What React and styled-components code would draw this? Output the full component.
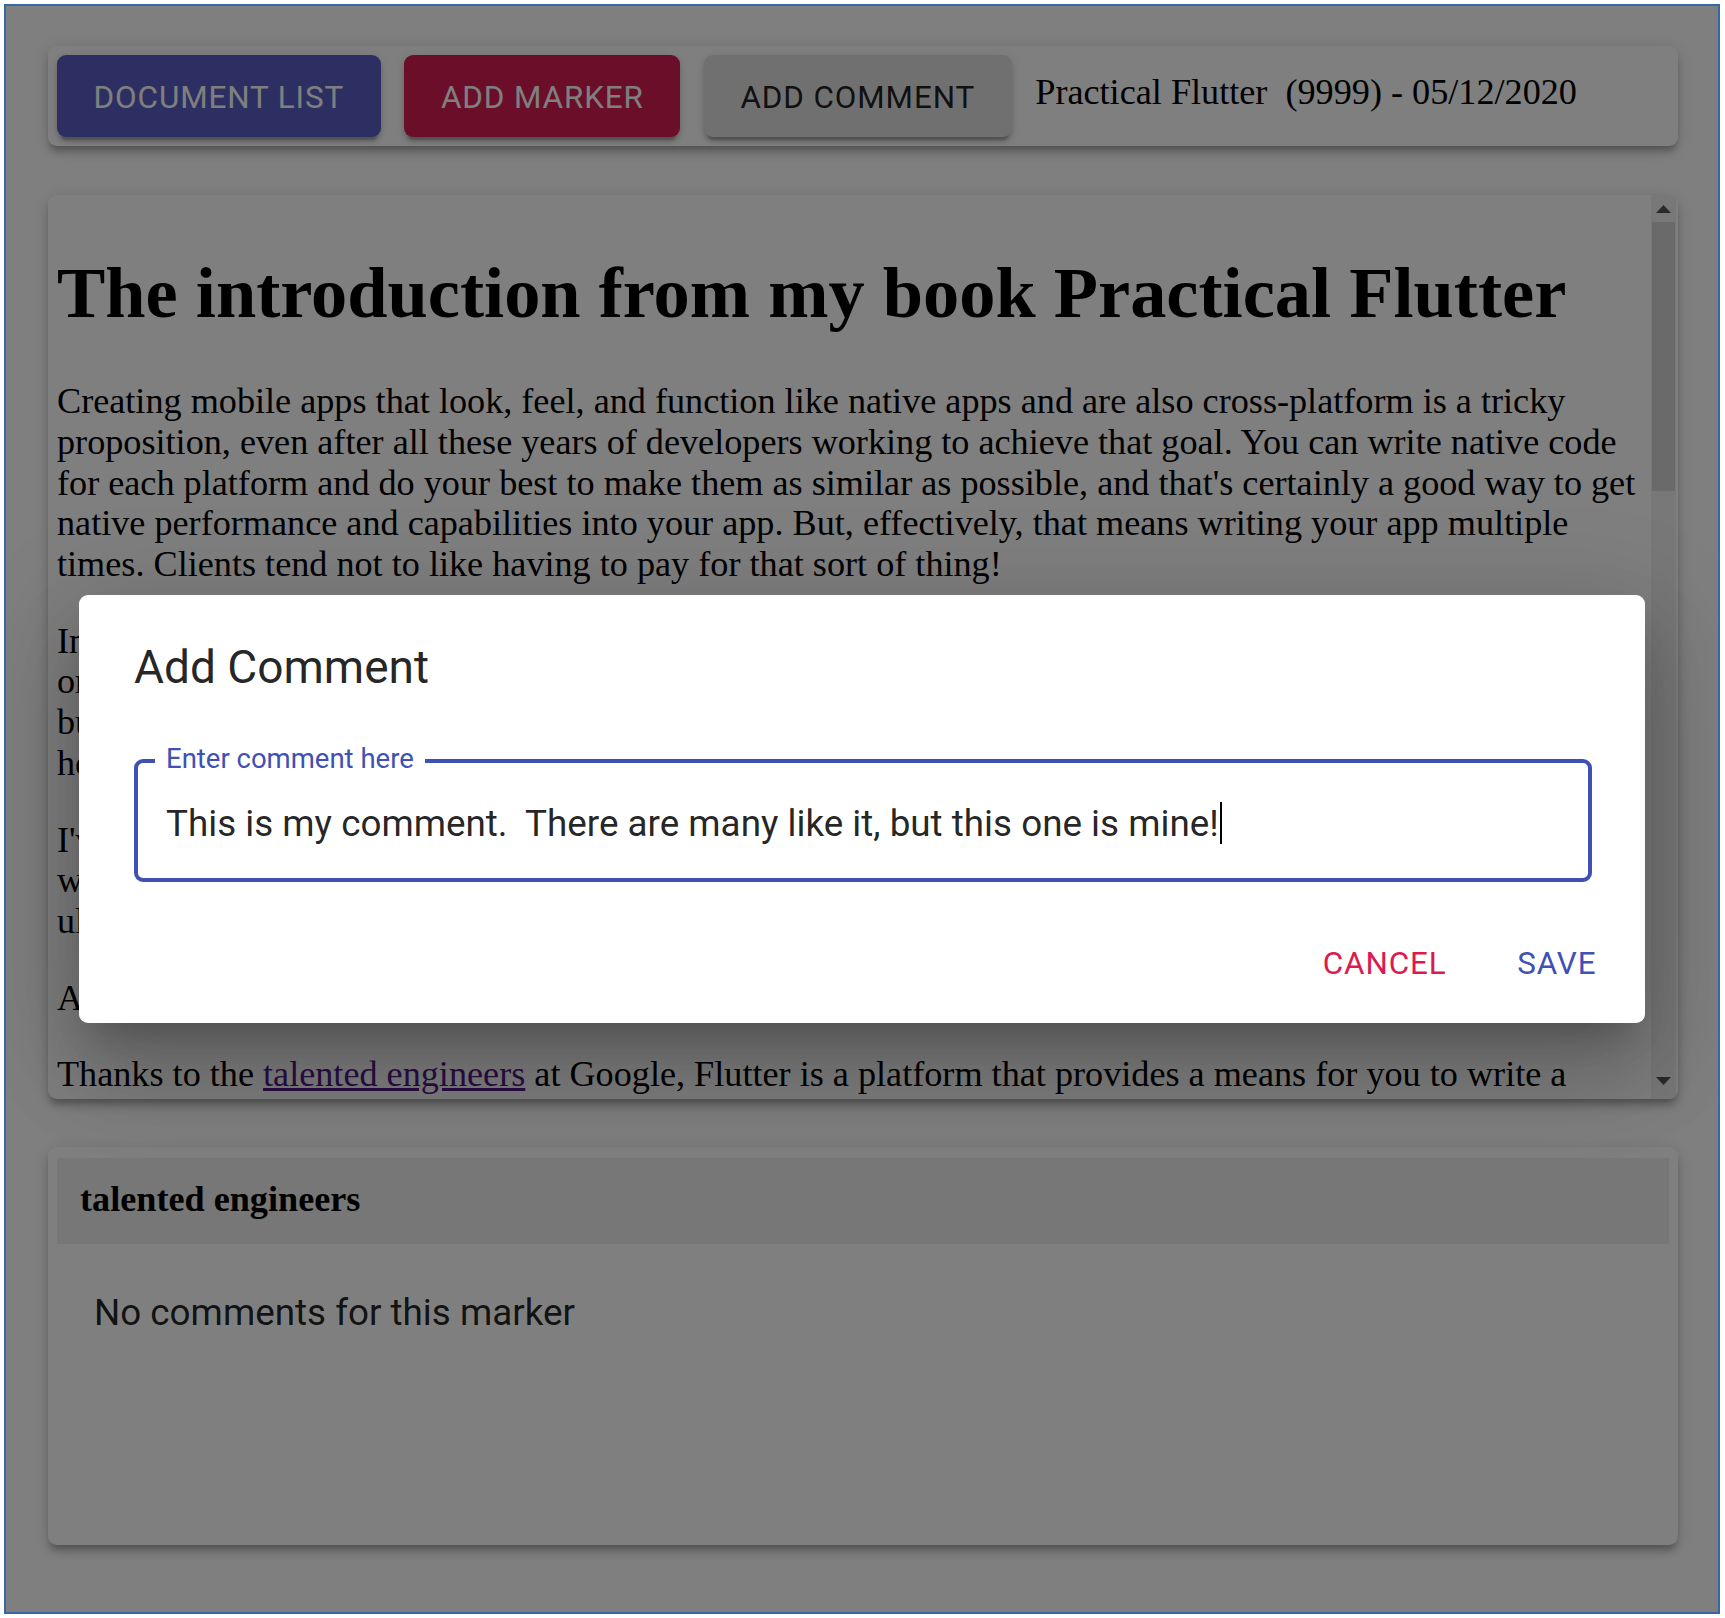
import React from "react";
import styled, { createGlobalStyle } from "styled-components";

const GlobalStyle = createGlobalStyle`
  html, body {
    margin: 0;
    padding: 0;
    background: #ffffff;
    overflow: hidden;
  }
  body {
    font-family: "Liberation Serif", "Times New Roman", serif;
  }
  * { box-sizing: border-box; }
`;

const Frame = styled.div`
  position: relative;
  margin: 4px 5px 4px 4px;
  height: calc(100vh - 8px);
  border: 2px solid #3567a9;
  background: #ffffff;
  overflow: hidden;
`;

const Page = styled.div`
  display: flex;
  flex-direction: column;
  padding: 40px 40px 0 42px;
`;

const paperShadow = `
  0 6.6px 6.6px -4.4px rgba(0,0,0,0.2),
  0 6.6px 8.8px 0 rgba(0,0,0,0.14),
  0 2.2px 17.7px 0 rgba(0,0,0,0.12)
`;

const Toolbar = styled.div`
  display: flex;
  align-items: flex-start;
  gap: 23.5px;
  padding: 9px;
  background: #ffffff;
  border-radius: 9px;
  box-shadow: ${paperShadow};
`;

const ActionButton = styled.button`
  font-family: Roboto, "Liberation Sans", sans-serif;
  font-weight: 400;
  font-size: 31.4px;
  letter-spacing: 0.9px;
  line-height: 54px;
  text-transform: uppercase;
  padding: 15.5px 36.6px 12.5px 36.6px;
  border: none;
  border-radius: 9px;
  background: ${(p) => p.$bg};
  color: ${(p) => p.$fg};
  box-shadow:
    0 6.6px 2.2px -4.4px rgba(0,0,0,0.2),
    0 4.4px 4.4px 0 rgba(0,0,0,0.14),
    0 2.2px 11px 0 rgba(0,0,0,0.12);
  cursor: pointer;
`;

const DocTitle = styled.div`
  margin-top: 17px;
  font-family: "Liberation Serif", "Times New Roman", serif;
  font-size: 36.2px;
  line-height: 40.7px;
  white-space: pre;
  color: #000000;
`;

const DocPaper = styled.section`
  display: flex;
  margin-top: 49px;
  height: 904px;
  background: #ffffff;
  border-radius: 9px;
  overflow: hidden;
  box-shadow: ${paperShadow};
`;

const DocBody = styled.article`
  flex: 1;
  overflow: hidden;
  padding: 10px 9px 0 9px;
  font-family: "Liberation Serif", "Times New Roman", serif;
  font-size: 36.2px;
  line-height: 40.7px;
  color: #000000;
`;

const Heading = styled.h1`
  font-size: 72.4px;
  font-weight: bold;
  line-height: 81.4px;
  margin: 47.4px 0;
`;

const Para = styled.p`
  margin: 36px 0;
`;

const Link = styled.a`
  color: #551a8b;
  text-decoration: underline;
`;

const ScrollTrack = styled.div`
  display: flex;
  flex-direction: column;
  width: 25px;
  margin-right: 2px;
  background: #f1f1f1;
`;

const ScrollArrow = styled.div`
  display: flex;
  align-items: center;
  justify-content: center;
  height: ${(p) => p.$h}px;
`;

const ScrollThumb = styled.div`
  height: 269px;
  margin: 0 1px;
  background: #d4d4d4;
`;

const ScrollSpace = styled.div`
  flex: 1;
`;

const CommentsPaper = styled.section`
  display: flex;
  flex-direction: column;
  margin-top: 48px;
  height: 398px;
  padding: 11px 9px 9px 9px;
  background: #ffffff;
  border-radius: 9px;
  box-shadow: ${paperShadow};
`;

const MarkerHeader = styled.div`
  display: flex;
  align-items: center;
  height: 86px;
  padding: 0 0 4px 23px;
  background: #eeeeee;
  font-family: "Liberation Serif", "Times New Roman", serif;
  font-weight: bold;
  font-size: 36.2px;
  color: #000000;
`;

const EmptyNote = styled.div`
  padding: 41px 37px;
  font-family: Roboto, "Liberation Sans", sans-serif;
  font-size: 36.8px;
  line-height: 1.5;
  color: rgba(0,0,0,0.87);
`;

const Backdrop = styled.div`
  position: absolute;
  inset: 0;
  display: flex;
  align-items: center;
  justify-content: center;
  background: rgba(0,0,0,0.5);
`;

const Dialog = styled.div`
  width: calc(100% - 146px);
  background: #ffffff;
  border-radius: 9px;
  box-shadow:
    0 24px 33px -15px rgba(0,0,0,0.2),
    0 53px 84px 7px rgba(0,0,0,0.14),
    0 20px 102px 18px rgba(0,0,0,0.12);
`;

const DialogTitle = styled.h2`
  margin: 0;
  padding: 37px 53px 34px 55px;
  font-family: Roboto, "Liberation Sans", sans-serif;
  font-weight: 400;
  font-size: 46px;
  line-height: 70.7px;
  color: rgba(0,0,0,0.87);
`;

const DialogContent = styled.div`
  padding: 21.5px 53px 24px 55px;
`;

const OutlinedField = styled.div`
  position: relative;
  display: flex;
  align-items: center;
  height: 123px;
  padding: 6px 30px 0 28px;
  border: 4px solid #3f51b5;
  border-radius: 9px;
`;

const FieldLabel = styled.label`
  position: absolute;
  left: 17px;
  top: -18px;
  padding: 0 11px;
  background: #ffffff;
  font-family: Roboto, "Liberation Sans", sans-serif;
  font-size: 27.5px;
  line-height: 27px;
  color: #3f51b5;
`;

const FieldValue = styled.div`
  display: flex;
  align-items: center;
  font-family: Roboto, "Liberation Sans", sans-serif;
  font-size: 36.8px;
  white-space: pre;
  color: rgba(0,0,0,0.87);
`;

const Caret = styled.span`
  display: inline-block;
  width: 2px;
  height: 42px;
  margin-left: 1px;
  background: #000000;
`;

const DialogActions = styled.div`
  display: flex;
  justify-content: flex-end;
  gap: 22px;
  padding: 17.7px;
`;

const TextButton = styled.button`
  min-width: 141px;
  padding: 13.3px 17.7px;
  border: none;
  background: transparent;
  font-family: Roboto, "Liberation Sans", sans-serif;
  font-weight: 400;
  font-size: 31.4px;
  letter-spacing: 0.9px;
  line-height: 1.75;
  text-transform: uppercase;
  color: ${(p) => p.$color};
  cursor: pointer;
`;

const Triangle = ({ up }) => (
  <svg width="15" height="8" viewBox="0 0 15 8">
    <polygon points={up ? "7.5,0 15,8 0,8" : "0,0 15,0 7.5,8"} fill="#555555" />
  </svg>
);

export default function App() {
  return (
    <>
      <GlobalStyle />
      <Frame>
        <Page>
          <Toolbar>
            <ActionButton $bg="#5a5ec6" $fg="#ffffff">Document List</ActionButton>
            <ActionButton $bg="#d61c54" $fg="#ffffff">Add Marker</ActionButton>
            <ActionButton $bg="#e0e0e0" $fg="rgba(0,0,0,0.87)">Add Comment</ActionButton>
            <DocTitle>{"Practical Flutter  (9999) - 05/12/2020"}</DocTitle>
          </Toolbar>

          <DocPaper>
            <DocBody>
              <Heading>The introduction from my book Practical Flutter</Heading>
              <Para>
                Creating mobile apps that look, feel, and function like native apps and are also
                cross-platform is a tricky proposition, even after all these years of developers
                working to achieve that goal. You can write native code for each platform and do
                your best to make them as similar as possible, and that's certainly a good way to
                get native performance and capabilities into your app. But, effectively, that means
                writing your app multiple times. Clients tend not to like having to pay for that
                sort of thing!
              </Para>
              <Para>
                Instead, you can go the hybrid route and write your app just once with web technologies,
                <br />
                or with some other shared language, then wrap it in a native container so it installs
                <br />
                but runs like a native app, yet those apps rarely look, feel, or perform quite as well as
                <br />
                hoped, no matter how much effort goes into them.
              </Para>
              <Para>
                I've been developing software for a long time, and I've tried nearly every cross-platform
                <br />
                way of building apps that has come along, and while many of them had their merits,
                <br />
                ultimately none of them were quite what I wanted.
              </Para>
              <Para>And that's where Flutter comes in!</Para>
              <Para>
                Thanks to the <Link href="#">talented engineers</Link> at Google, Flutter is a
                platform that provides a means for you to write a single app, using a single code
                base and a single language, that runs on both iOS and Android with truly native
                performance and a look and feel that your users will be happy with.
              </Para>
              <Para>
                In this book, we'll explore Flutter from the ground up, building real apps along
                the way, so that by the end you'll have a solid understanding of what Flutter
                offers and how to use it to build your own apps.
              </Para>
            </DocBody>
            <ScrollTrack>
              <ScrollArrow $h={27}>
                <Triangle up />
              </ScrollArrow>
              <ScrollThumb />
              <ScrollSpace />
              <ScrollArrow $h={36}>
                <Triangle />
              </ScrollArrow>
            </ScrollTrack>
          </DocPaper>

          <CommentsPaper>
            <MarkerHeader>talented engineers</MarkerHeader>
            <EmptyNote>No comments for this marker</EmptyNote>
          </CommentsPaper>
        </Page>

        <Backdrop>
          <Dialog role="dialog" aria-labelledby="add-comment-title">
            <DialogTitle id="add-comment-title">Add Comment</DialogTitle>
            <DialogContent>
              <OutlinedField>
                <FieldLabel>Enter comment here</FieldLabel>
                <FieldValue>
                  {"This is my comment.  There are many like it, but this one is mine!"}
                  <Caret />
                </FieldValue>
              </OutlinedField>
            </DialogContent>
            <DialogActions>
              <TextButton $color="#dc1a50">Cancel</TextButton>
              <TextButton $color="#3f51b5">Save</TextButton>
            </DialogActions>
          </Dialog>
        </Backdrop>
      </Frame>
    </>
  );
}
